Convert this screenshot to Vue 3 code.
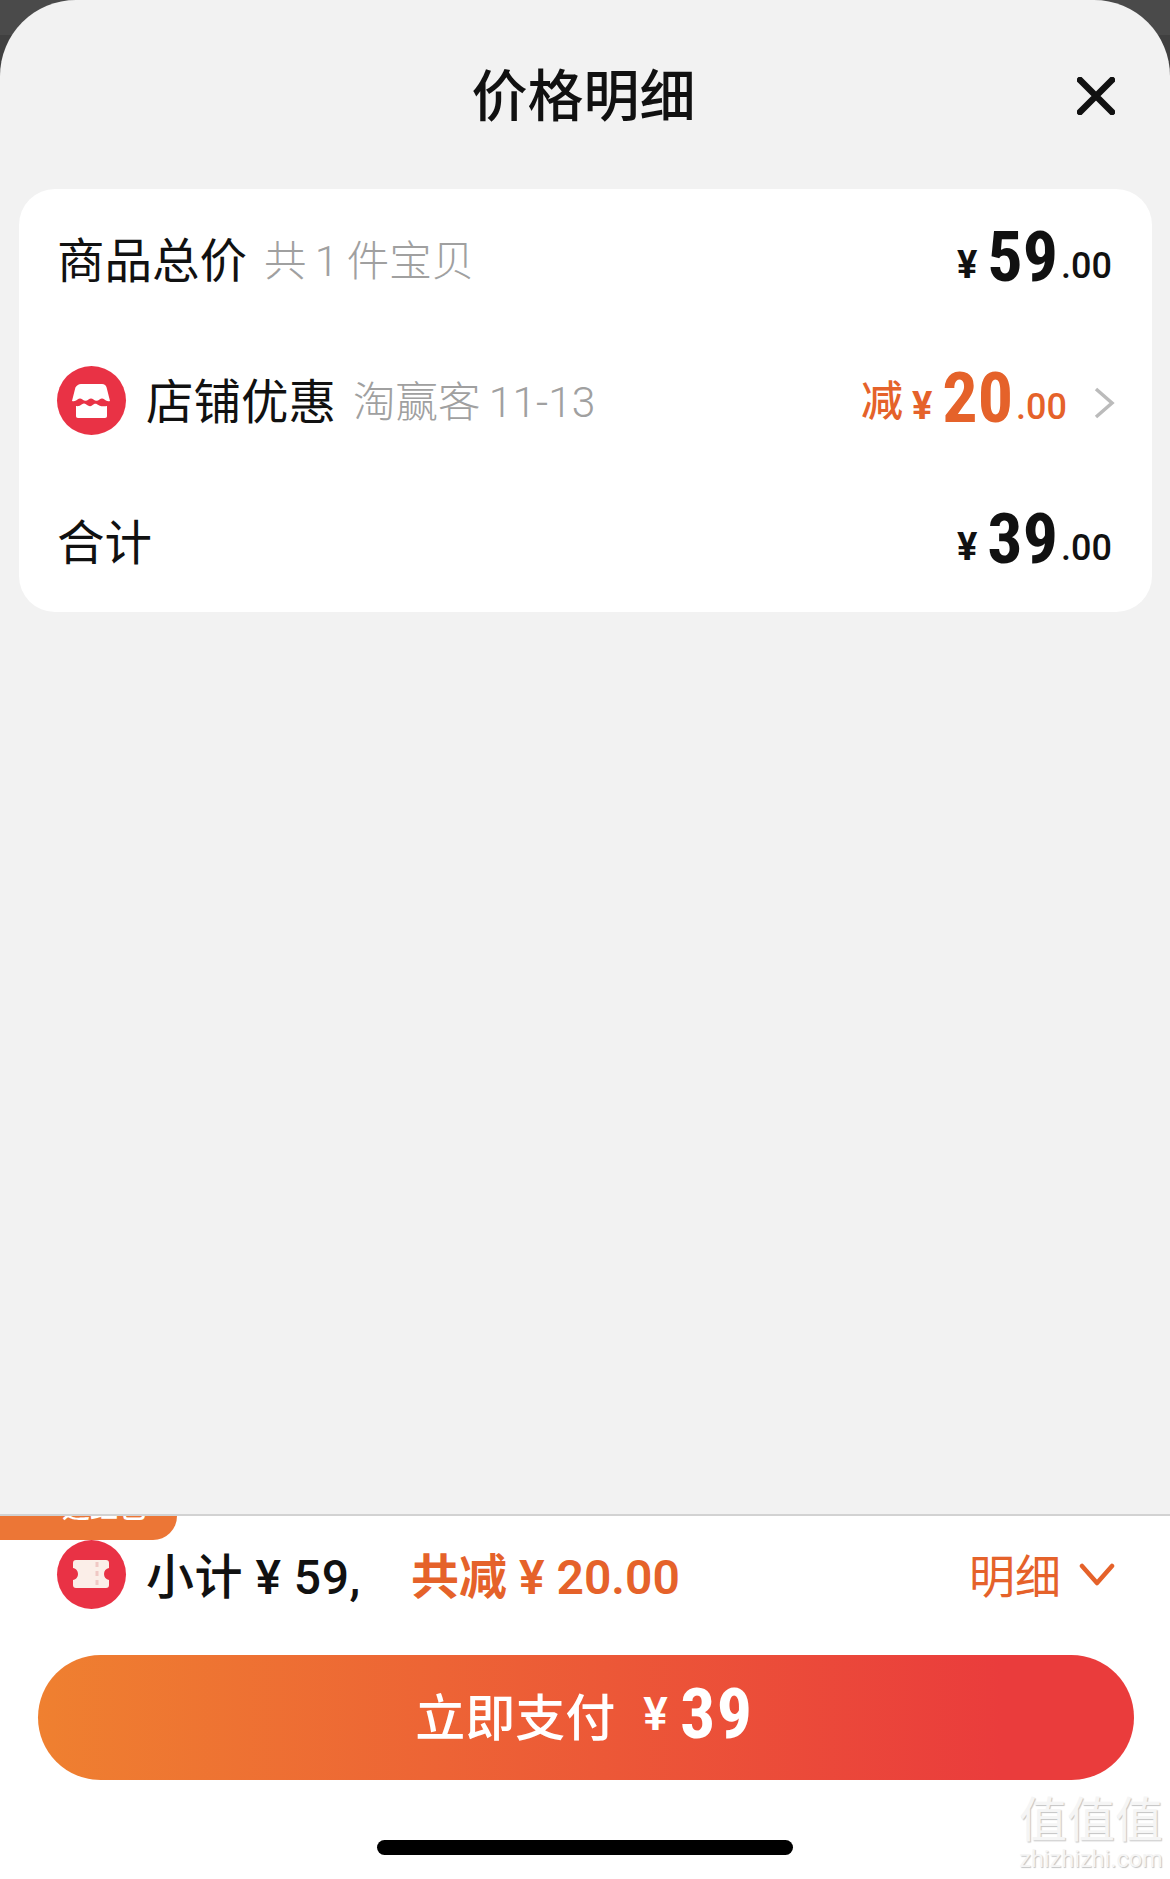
<script setup>
const rows = [
  { label: '商品总价', note: '共 1 件宝贝', int: '59' },
  { label: '店铺优惠', note: '淘赢客 11-13', int: '20', store: true, discount: true },
  { label: '合计', note: '', int: '39' }
]
</script>

<template>
  <div class="page">
    <div class="sheet">
      <header class="head">
        <h1>价格明细</h1>
        <svg class="close" viewBox="0 0 38 38" aria-label="关闭">
          <path d="M3 3 35 35M35 3 3 35" />
        </svg>
      </header>

      <section class="card">
        <div v-for="row in rows" :key="row.label" class="row">
          <div class="left">
            <span v-if="row.store" class="badge">
              <svg viewBox="0 0 69 69">
                <path class="white" d="M24 18h21c2.500 0 4 1.200 4.600 3.500L53 35c-2.500.5-3.500 0-5.500-1.500-1.800-1.400-3.200-1.400-5 0-2 1.600-4 1.600-6 0-1.800-1.400-3.200-1.400-5 0-2 1.600-4 1.600-6 0-1.800-1.400-3.200-1.400-5 0-2 1.500-3 2-5.500 1.500l3.400-13.500C20 19.200 21.500 18 24 18Z" />
                <path class="white" d="M19 40c2.500.5 4-.4 6-1.800 1.400-1 2.600-1 4 0 2 1.500 4 2.800 6 1.200 2-1.500 3.200-2.200 5-1.200 2.200 1.500 4.500 2.600 10 1.800v10c0 1.300-.7 2-2 2H21c-1.300 0-2-.7-2-2Z" />
              </svg>
            </span>
            <span class="label">{{ row.label }}</span>
            <span v-if="row.note" class="note">{{ row.note }}</span>
          </div>
          <div class="price" :class="{ orange: row.discount }">
            <span v-if="row.discount" class="jian">减</span>
            <span class="yen">¥</span>
            <span class="int">{{ row.int }}</span>
            <span class="dec">.00</span>
            <svg v-if="row.discount" class="chev" viewBox="0 0 22 32">
              <path d="M3 2 19 16 3 30" />
            </svg>
          </div>
        </div>
      </section>
    </div>

    <footer class="foot">
      <div class="tag"><span>退红包</span></div>
      <div class="sum">
        <span class="badge">
          <svg viewBox="0 0 69 69">
            <path class="ticket" d="M19 20h30c2 0 3 1 3 3v5c-3 .5-5 3-5 6s2 5.500 5 6v5c0 2-1 3-3 3H19c-2 0-3-1-3-3v-5c3-.5 5-3 5-6s-2-5.500-5-6v-5c0-2 1-3 3-3Z" />
            <path class="perf" d="M40 22v24" />
          </svg>
        </span>
        <span class="sub">小计 ¥ 59,</span>
        <span class="cut">共减 ¥ 20.00</span>
        <span class="detail">明细</span>
        <svg class="down" viewBox="0 0 36 24"><path d="M3 3 18 20 33 3" /></svg>
      </div>
      <button class="pay" type="button">
        <span class="pay-label">立即支付</span>
        <span class="pay-yen">¥</span>
        <span class="pay-int">39</span>
      </button>
      <div class="home"></div>
      <div class="mark">
        <div class="mark-zh">值值值</div>
        <div class="mark-en">zhizhizhi.com</div>
      </div>
    </footer>
  </div>
</template>

<style>
html, body { margin: 0; background: #404040; }
</style>

<style scoped>
.page {
  width: 1170px;
  height: 1879px;
  display: flex;
  flex-direction: column;
  position: relative;
  overflow: hidden;
  background: linear-gradient(#4a4a4a 0 35px, #404040 35px);
  font-family: "Noto Sans CJK SC", "Noto Sans", sans-serif;
  color: #111;
}
.sheet {
  flex: 1;
  background: #f2f2f2;
  border-radius: 76px 76px 0 0;
  padding: 0 18px 0 19px;
}
.head {
  height: 189px;
  display: flex;
  align-items: center;
  justify-content: center;
  position: relative;
}
.head h1 {
  margin: -6px 0 0 -4px;
  font-size: 56px;
  font-weight: 500;
  line-height: 1;
}
.close {
  position: absolute;
  left: 1058px;
  top: 77px;
  width: 38px;
  height: 38px;
}
.close path {
  fill: none;
  stroke: #111;
  stroke-width: 6.500;
  stroke-linecap: round;
}
.card {
  background: #fff;
  border-radius: 36px;
  padding: 0 39px;
  height: 423px;
  display: grid;
  grid-template-rows: repeat(3, 141px);
}
.row {
  display: flex;
  align-items: center;
  justify-content: space-between;
}
.left {
  display: flex;
  align-items: center;
  margin-left: -1px;
}
.badge {
  width: 69px;
  height: 69px;
  flex: none;
  border-radius: 50%;
  background: #e93245;
  display: block;
}
.badge svg { display: block; width: 69px; height: 69px; }
.white { fill: #fff; }
.ticket { fill: #fbeee8; }
.perf {
  fill: none;
  stroke: #f0c8c4;
  stroke-width: 3;
  stroke-dasharray: 5 4;
}
.row .badge { margin: 0 20px 0 0; }
.label {
  font-size: 47.500px;
  line-height: 1;
  margin-top: -3px;
}
.note {
  font-family: Roboto, "Noto Sans CJK SC", sans-serif;
  font-size: 42.500px;
  font-weight: 300;
  color: #a0a0a0;
  margin: 5px 0 0 17px;
  line-height: 1;
  word-spacing: -2px;
  white-space: nowrap;
}
.price {
  white-space: nowrap;
  font-family: Roboto, "Noto Sans CJK SC", sans-serif;
  font-weight: 700;
  color: #111;
  margin: 14px 1px 0 0;
  line-height: 72px;
}
.price.orange { color: #e5622a; margin-right: -2px; }
.jian {
  font-family: "Noto Sans CJK SC", sans-serif;
  font-size: 42px;
  font-weight: 500;
  margin-right: 9px;
  vertical-align: 6px;
}
.yen {
  font-size: 38px;
  margin-right: 10px;
  vertical-align: 3px;
}
.int {
  font-size: 70px;
  font-stretch: 87%;
}
.dec {
  font-size: 36px;
  font-weight: 500;
  margin-left: 3px;
  vertical-align: 3px;
}
.chev {
  width: 22px;
  height: 32px;
  margin-left: 26px;
  vertical-align: 3px;
}
.chev path {
  fill: none;
  stroke: #bbb;
  stroke-width: 3.500;
}
.foot {
  height: 365px;
  flex: none;
  box-sizing: border-box;
  background: #fff;
  border-top: 2px solid #d2d2d2;
  position: relative;
}
.tag {
  position: absolute;
  left: 0;
  top: 0;
  width: 177px;
  height: 24px;
  overflow: hidden;
  background: #ec7636;
  border-radius: 0 0 30px 0;
  color: #fff;
}
.tag span {
  position: absolute;
  left: 62px;
  bottom: 20px;
  font-size: 28px;
  line-height: 1;
  font-weight: 500;
  white-space: nowrap;
}
.sum {
  height: 139px;
  display: flex;
  align-items: flex-start;
  padding: 24px 55px 0 57px;
  box-sizing: border-box;
}
.sum > * { align-self: flex-start; }
.sum .badge { margin: 0 20px 0 0; }
.sub, .cut {
  font-family: Roboto, "Noto Sans CJK SC", sans-serif;
  font-size: 48px;
  font-weight: 500;
  line-height: 75px;
  white-space: nowrap;
}
.sub { width: 265px; letter-spacing: .5px; }
.cut {
  color: #e5622a;
  font-weight: 600;
}
.detail {
  margin-left: auto;
  font-size: 46px;
  line-height: 66px;
  color: #e5622a;
}
.down {
  width: 36px;
  height: 24px;
  margin: 23px 0 0 18px;
}
.down path {
  fill: none;
  stroke: #e5622a;
  stroke-width: 4.500;
  stroke-linecap: round;
  stroke-linejoin: round;
}
.pay {
  display: flex;
  align-items: center;
  justify-content: center;
  width: 1096px;
  height: 125px;
  margin-left: 38px;
  padding: 0 3px 7px 0;
  border: 0;
  border-radius: 63px;
  color: #fff;
  font-family: "Noto Sans CJK SC", sans-serif;
  background: linear-gradient(90deg, #ef8030, #ea3c3c 88%);
}
.pay-label {
  font-size: 50px;
  font-weight: 500;
}
.pay-yen {
  font-size: 46px;
  font-family: Roboto, sans-serif;
  font-weight: 600;
  margin-left: 28px;
}
.pay-int {
  font-family: Roboto, sans-serif;
  font-size: 70px;
  font-weight: 700;
  margin-left: 12px;
  font-stretch: 87%;
  letter-spacing: 1.500px;
}
.home {
  width: 416px;
  height: 15px;
  margin: 60px 0 0 377px;
  border-radius: 8px;
  background: #000;
}
.mark {
  position: absolute;
  right: 7px;
  bottom: 7px;
  width: 144px;
  text-align: center;
  color: #f5f5f5;
  text-shadow: 1px 1px 1px #c4c4c4;
}
.mark-zh {
  font-size: 48px;
  line-height: 54px;
  white-space: nowrap;
}
.mark-en {
  font-family: Roboto, sans-serif;
  font-size: 23.500px;
  line-height: 26px;
  margin-top: 3px;
  white-space: nowrap;
}
</style>
